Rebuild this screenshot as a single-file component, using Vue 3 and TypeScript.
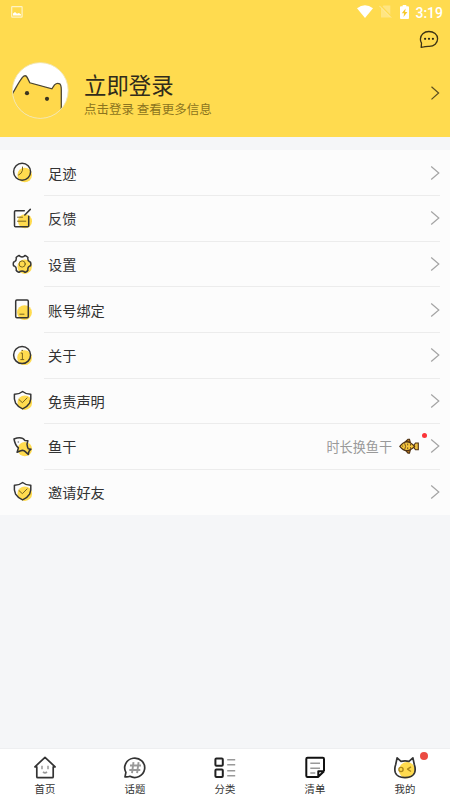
<script setup lang="ts">
interface MenuItem {
  icon: 'clock' | 'note' | 'gear' | 'phone' | 'info' | 'shield' | 'fish'
  label: string
  hint?: string
}

interface Tab {
  icon: 'home' | 'topic' | 'category' | 'list' | 'mine'
  label: string
  badge?: boolean
}

const menu: MenuItem[] = [
  { icon: 'clock', label: '足迹' },
  { icon: 'note', label: '反馈' },
  { icon: 'gear', label: '设置' },
  { icon: 'phone', label: '账号绑定' },
  { icon: 'info', label: '关于' },
  { icon: 'shield', label: '免责声明' },
  { icon: 'fish', label: '鱼干', hint: '时长换鱼干' },
  { icon: 'shield', label: '邀请好友' },
]

const tabs: Tab[] = [
  { icon: 'home', label: '首页' },
  { icon: 'topic', label: '话题' },
  { icon: 'category', label: '分类' },
  { icon: 'list', label: '清单' },
  { icon: 'mine', label: '我的', badge: true },
]
</script>

<template>
  <div class="screen">
    <header class="header">
      <div class="status">
        <svg class="status-image" width="12" height="12" viewBox="0 0 12 12">
          <rect x=".7" y=".7" width="10.4" height="10.4" rx=".6" fill="none" stroke="#fff3c4" stroke-width="1.2" />
          <path d="M2 9.6V7.4L4 6l2 1.8L8 7l2 1.4v1.2z" fill="#fff" />
        </svg>
        <div class="status-right">
          <svg width="16" height="13" viewBox="0 0 16 13">
            <path d="M0 3.2Q8-2.8 16 3.2L8 13z" fill="#fff" />
          </svg>
          <svg class="sim" width="13" height="13" viewBox="0 0 13 13">
            <path d="M4.5.5h6.8v12H2v-9z" fill="#ffe582" />
            <path d="M1.2.2l11.6 12" stroke="#ffdb4f" stroke-width="1.6" />
            <path d="M.3.8l11.8 11.8" stroke="#ffeba6" stroke-width="1" />
          </svg>
          <svg class="battery" width="9" height="14" viewBox="0 0 9 14">
            <path d="M2.7 0h3.6v1.3H8q1 0 1 1V13q0 1-1 1H1q-1 0-1-1V2.3q0-1 1-1h1.7z" fill="#fff" />
            <path d="M5.6 3.4L1.8 8.2h2.3L3.5 12 7.4 6.9H5.1z" fill="#f7c92b" />
          </svg>
          <span class="time">3:19</span>
        </div>
      </div>
      <div class="tools">
        <svg width="20" height="19" viewBox="0 0 20 19" fill="none">
          <path d="M2.2 17.3L2.5 13.2A8 7.8 0 0 1 1.4 9C1.4 4.8 5 1.5 9.9 1.5s8.7 3.2 8.7 7.3c0 4.4-3.5 7.4-8.4 7.5-2.6.1-4.2.1-5.5.5z" stroke="#3d3415" stroke-width="1.3" stroke-linejoin="round" />
          <g fill="#2c2717"><circle cx="6.1" cy="8.8" r="1.1" /><circle cx="10" cy="8.8" r="1.1" /><circle cx="13.9" cy="8.8" r="1.1" /></g>
        </svg>
      </div>
      <div class="profile">
        <svg class="avatar" width="57" height="57" viewBox="0 0 57 57">
          <defs><clipPath id="avatar-clip"><circle cx="28.3" cy="28.5" r="27.8" /></clipPath></defs>
          <circle cx="28.3" cy="28.5" r="27.8" fill="#fff" />
          <g clip-path="url(#avatar-clip)">
            <path d="M-1 34C3 28 6 21 10.4 15.4Q13.5 12 15.3 15.6L17.8 20.8 39.9 26.8 42.5 22.9Q45 20.4 47.7 21.8 49.3 23 49.3 28V48L46 58H-1z" fill="#ffd84b" />
            <path d="M-1 34C3 28 6 21 10.4 15.4Q13.5 12 15.3 15.6L17.8 20.8 39.9 26.8 42.5 22.9Q45 20.4 47.7 21.8 49.3 23 49.3 28V48" fill="none" stroke="#4b4532" stroke-width="1.3" />
          </g>
          <circle cx="15" cy="31.2" r="2.1" fill="#3c3520" />
          <circle cx="35" cy="36.8" r="2.1" fill="#3c3520" />
          <circle cx="28.3" cy="28.5" r="27.9" fill="none" stroke="#f1e5b4" stroke-width=".9" />
        </svg>
        <div class="account">
          <div class="login">立即登录</div>
          <div class="subtitle">点击登录 查看更多信息</div>
        </div>
        <svg class="arrow dark" width="10" height="16" viewBox="0 0 10 16"><path d="M1.5 1.8L8.6 8l-7.1 6.4" /></svg>
      </div>
    </header>

    <main class="menu">
      <div v-for="item in menu" :key="item.label" class="row">
        <svg v-if="item.icon === 'clock'" class="icon" viewBox="0 0 24 24">
          <circle class="spot" cx="13.7" cy="14" r="7.3" />
          <circle cx="11.1" cy="10.8" r="8.5" />
          <path class="thin" d="M11.5 6v3.2Q11 12.5 7.6 14" />
        </svg>
        <svg v-else-if="item.icon === 'note'" class="icon" viewBox="0 0 24 24">
          <circle class="spot" cx="14" cy="14.2" r="7" />
          <path d="M13.3 3.7H4.5q-1 0-1 1v14q0 1 1 1h12.2q1 0 1-1V9.2M13.8 8l5.5-5.6" />
          <path class="thin" d="M6.5 10.2h5M6.5 14.2h8.3" />
        </svg>
        <svg v-else-if="item.icon === 'gear'" class="icon" viewBox="0 0 24 24">
          <circle class="spot" cx="13.7" cy="13.7" r="7.2" />
          <path d="M7.3 2.8q1.2-.5 1.8.5 1.9 1.2 3.9 0 .6-1 1.8-.5l1.6 1q.9.5.4 1.7-.1 2.2 1.7 3.2 1.3.1 1.3 1.2v2q0 1.1-1.3 1.2-1.8 1-1.7 3.2.5 1.2-.4 1.7l-1.6 1q-1.2.5-1.8-.5-2-1.2-3.9 0-.6 1-1.8.5l-1.6-1q-.9-.5-.4-1.7.1-2.2-1.7-3.2-1.3-.1-1.3-1.2v-2q0-1.1 1.3-1.2 1.8-1 1.7-3.2-.5-1.2.4-1.7z" />
          <circle class="thin" cx="11.2" cy="11" r="3.1" />
        </svg>
        <svg v-else-if="item.icon === 'phone'" class="icon" viewBox="0 0 24 24">
          <circle class="spot" cx="13.5" cy="14.6" r="7.4" />
          <rect x="4.7" y="2" width="12.6" height="17.7" rx="1.2" />
          <path class="thin" d="M8.8 16.2h4.2" />
        </svg>
        <svg v-else-if="item.icon === 'info'" class="icon" viewBox="0 0 24 24">
          <circle class="spot" cx="13.6" cy="13.7" r="7.4" />
          <circle cx="11.1" cy="11.1" r="8.5" />
          <path class="thin" d="M10.2 9.1h1.2v6.5M9.8 15.6h3M10.9 6.4h.8" />
        </svg>
        <svg v-else-if="item.icon === 'shield'" class="icon" viewBox="0 0 24 24">
          <circle class="spot" cx="13.8" cy="13.7" r="7.3" />
          <path d="M11.6 2.5Q15 5.3 19.8 5.2q.6 5.5-1.2 9-2.2 3.7-7 5.7-4.8-2-7-5.7-1.8-3.5-1.2-9Q8.2 5.3 11.6 2.5z" />
          <path class="thin" d="M8 10.6l3.4 3.1 4.7-4.8" />
        </svg>
        <svg v-else class="icon" viewBox="0 0 24 24">
          <circle class="spot" cx="13.9" cy="14.1" r="7.2" />
          <path d="M3 4Q10.8.9 14 5.6l2.9.1-.9 3.4q.4 3.2 1.2 4.6l2.8.5q-2.4 1.3-2.7 5.2l-3.9-3.5q-2-1-3.7-.1l-3.6 1.4 1.3-4.3q-3.4-3-4.4-8.9z" />
          <circle class="eye" cx="7.3" cy="7" r=".8" />
        </svg>
        <div class="row-body">
          <span class="label">{{ item.label }}</span>
          <span v-if="item.hint" class="hint">{{ item.hint }}</span>
          <span v-if="item.hint" class="reward">
            <svg width="21" height="17" viewBox="0 0 21 17">
              <path d="M6.7 3.5L9 1.3h1.5l.8 3zM6.7 12.7L9 15.1h1.5l.8-3z" fill="#ba7b22" stroke="#4e3214" stroke-width="1.1" />
              <path d="M15 7l1.5-2h2.8v6.8h-2.8l-1.5-2z" fill="#eebe40" stroke="#4e3214" stroke-width="1.1" />
              <path d="M.8 8.4Q7.5-.6 15.6 8.4 7.5 17 .8 8.4z" fill="#f7c83d" stroke="#4e3214" stroke-width="1.2" />
              <path d="M5.6 5.2q2 3.2 0 6.5M8.7 5.6v1.8M8.7 9.3v1.8M11.5 5.8v1.8M11.5 9.1v1.8" fill="none" stroke="#74501f" stroke-width="1" />
              <circle cx="3.7" cy="8" r=".6" fill="#4e3214" />
            </svg>
            <i class="dot"></i>
          </span>
          <svg class="arrow" width="10" height="16" viewBox="0 0 10 16"><path d="M1.2 1.5L8.8 8l-7.6 6.5" /></svg>
        </div>
      </div>
    </main>

    <nav class="tabs">
      <div v-for="tab in tabs" :key="tab.label" class="tab">
        <span class="tab-icon">
          <svg v-if="tab.icon === 'home'" viewBox="0 0 24 24">
            <path d="M3.8 10.8H1.9L12 1.4l10.1 9.4h-1.9v9.9q0 1-1 1H4.8q-1 0-1-1z" />
            <path class="gray" d="M9 9.7v3.5M15 9.7v3.5M10 15.9q2 2 4 0" />
          </svg>
          <svg v-else-if="tab.icon === 'topic'" viewBox="0 0 24 24">
            <path d="M2 20.8l.9-4.4a10 9.7 0 1 1 4 3.9q-2.1.9-4.9.5z" />
            <path class="gray heavy" d="M10.5 6.2L9 17.2M15.6 6.2l-1.5 11M7 9.5h11M6.3 14h11" />
          </svg>
          <svg v-else-if="tab.icon === 'category'" viewBox="0 0 24 24">
            <rect class="box" x="2.4" y="2.4" width="7.4" height="7.4" rx="1" />
            <rect class="box" x="2.4" y="13.5" width="7.4" height="7.4" rx="1" />
            <path class="gray" d="M14.2 3.8h8M14.2 8.7h8M14.2 14.8h8M14.2 19.8h8" />
          </svg>
          <svg v-else-if="tab.icon === 'list'" viewBox="0 0 24 24">
            <path class="bold" d="M21 15.2V3q0-1.2-1.2-1.2H4.5Q3.3 1.8 3.3 3v16.7q0 1.2 1.2 1.2H15l6-5.7M15.3 20v-4.7h4.9" />
            <path class="gray" d="M7.3 7.3H17M7.3 12.3H17M7.3 17h5" />
          </svg>
          <svg v-else viewBox="0 0 24 24">
            <circle cx="14" cy="14.2" r="8.2" class="spot" />
            <path d="M2.7 8.5L4.1 1.8 8 5.3q4-.9 8 0l3.9-3.5 1.4 6.7q1.6 4.4.3 8.2-1.9 4.9-9.6 4.9T2.4 16.7Q1.1 12.9 2.7 8.5z" />
            <circle cx="8" cy="13.5" r="2.1" class="wink" />
            <path class="wink" d="M18 10.9l-3.5 2.3 3.5 2.3" />
          </svg>
          <i v-if="tab.badge" class="badge"></i>
        </span>
        <span class="tab-label">{{ tab.label }}</span>
      </div>
    </nav>
  </div>
</template>

<style>
body {
  margin: 0;
}
</style>

<style scoped>
.screen {
  display: flex;
  flex-direction: column;
  width: 450px;
  height: 800px;
  overflow: hidden;
  background: #f5f6f8;
  color: #333;
  font-family: "Noto Sans CJK SC", sans-serif;
}
svg {
  display: block;
  flex: none;
}
.header {
  height: 137px;
  flex: none;
  background: #ffdb4f;
}
.status {
  display: flex;
  justify-content: space-between;
  height: 25px;
  padding: 0 7px 0 11px;
}
.status-image {
  margin-top: 6px;
}
.status-right {
  display: flex;
  padding-top: 5px;
}
.sim {
  margin-left: 6px;
}
.battery {
  margin-left: 8px;
}
.time {
  margin-left: 6px;
  color: #fff;
  font: 500 14px/16px Roboto, sans-serif;
}
.tools {
  display: flex;
  justify-content: flex-end;
  height: 27px;
  padding: 5px 11px 0 0;
}
.profile {
  display: flex;
  padding: 5px 10px 0 12px;
}
.account {
  flex: 1;
  padding: 6px 0 0 15px;
}
.login {
  color: #302b1b;
  font-size: 22.4px;
  line-height: 32px;
}
.subtitle {
  color: #8c741e;
  font-size: 12.5px;
  line-height: 18px;
}
.arrow path {
  fill: none;
  stroke: #a4a4a4;
  stroke-width: 1.2;
}
.arrow.dark {
  margin-top: 23px;
}
.arrow.dark path {
  stroke: #5b4e20;
}
.menu {
  flex: none;
  margin-top: 13px;
  padding-top: 0.6px;
  background: #fcfcfc;
}
.row {
  display: flex;
  align-items: center;
  height: 45.6px;
  padding: 0 10px 0 11px;
}
.row:last-child {
  height: 45.2px;
}
.icon {
  width: 24px;
  height: 24px;
  margin-right: 9px;
}
.icon * {
  fill: none;
  stroke: #353535;
  stroke-width: 1.5;
  stroke-linecap: round;
  stroke-linejoin: round;
}
.icon .spot {
  fill: #ffdb4f;
  stroke: none;
}
.icon .thin {
  stroke: #79651f;
  stroke-width: 1;
}
.icon .eye {
  fill: #777;
  stroke: none;
}
.row-body {
  display: flex;
  align-items: center;
  flex: 1;
  height: 100%;
  box-sizing: border-box;
  border-bottom: 1px solid #ececec;
}
.row:last-child .row-body {
  border-color: transparent;
}
.label {
  flex: 1;
  padding-left: 4px;
  font-size: 14.2px;
  line-height: 22px;
}
.hint {
  color: #999;
  font-size: 13.1px;
}
.reward {
  position: relative;
  margin: 0 10px 0 7px;
}
.dot {
  position: absolute;
  top: -5px;
  right: -7px;
  width: 5px;
  height: 5px;
  border-radius: 50%;
  background: #fb3438;
}
.tabs {
  display: flex;
  flex: none;
  height: 52px;
  margin-top: auto;
  box-sizing: border-box;
  border-top: 1px solid #eeeff1;
  background: #fff;
}
.tab {
  display: flex;
  flex: 1;
  flex-direction: column;
  align-items: center;
  padding-top: 7px;
}
.tab-icon {
  position: relative;
}
.tab-icon svg {
  width: 24px;
  height: 24px;
}
.tab-icon svg * {
  fill: none;
  stroke: #333;
  stroke-width: 1.7;
  stroke-linejoin: round;
}
.tab-icon svg .box {
  stroke: #222;
  stroke-width: 2;
}
.tab-icon svg .bold {
  stroke: #111;
  stroke-width: 2;
}
.tab-icon svg .gray {
  stroke: #999;
  stroke-width: 1.5;
}
.tab-icon svg .heavy {
  stroke-width: 1.9;
}
.tab-icon svg .spot {
  fill: #ffdb4f;
  stroke: none;
}
.tab-icon svg .wink {
  stroke: #ac871a;
  stroke-width: 1.4;
}
.badge {
  position: absolute;
  top: -4px;
  right: -11px;
  width: 8px;
  height: 8px;
  border-radius: 50%;
  background: #eb4b42;
}
.tab-label {
  margin-top: 1px;
  font-size: 10.4px;
  line-height: 16px;
}
</style>
